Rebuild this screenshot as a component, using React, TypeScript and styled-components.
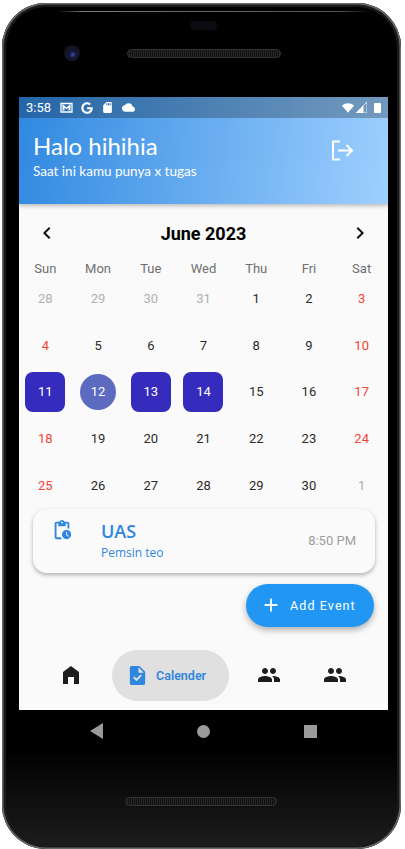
import styled, { createGlobalStyle } from "styled-components";
import { FaGoogle } from "react-icons/fa";
import {
  MdAdd,
  MdChevronLeft,
  MdChevronRight,
  MdCloud,
  MdHomeFilled,
  MdOutlinePendingActions,
  MdPeople,
  MdSdCard,
  MdTask,
} from "react-icons/md";

const WEEKDAYS = ["Sun", "Mon", "Tue", "Wed", "Thu", "Fri", "Sat"];

type Day = { label: number; muted?: boolean; selected?: boolean; today?: boolean };

const DAYS: Day[] = [
  { label: 28, muted: true },
  { label: 29, muted: true },
  { label: 30, muted: true },
  { label: 31, muted: true },
  ...[1, 2, 3, 4, 5, 6, 7, 8, 9, 10].map((label) => ({ label })),
  { label: 11, selected: true },
  { label: 12, today: true },
  { label: 13, selected: true },
  { label: 14, selected: true },
  ...Array.from({ length: 16 }, (_, i) => ({ label: i + 15 })),
  { label: 1, muted: true },
];

const App = () => {
  return (
    <Device>
      <GlobalStyle />
      <TopBezel>
        <Sensor />
        <CameraRow>
          <Camera />
          <Speaker />
        </CameraRow>
      </TopBezel>

      <Screen>
        <Header>
          <StatusBar>
            <StatusGroup>
              <Clock>3:58</Clock>
              <svg width="13" height="11" viewBox="0 0 13 11">
                <path d="M1 1.500h11v8.500H1z" fill="none" stroke="#fff" strokeWidth="1.300" />
                <path d="M2.500 2l4 3.600L10.500 2v6.500h-2V5.500L6.500 7.300 4.500 5.500V8.500h-2z" fill="#fff" />
              </svg>
              <FaGoogle size={12} color="#fff" />
              <MdSdCard size={13} color="#fff" />
              <MdCloud size={13} color="#fff" />
            </StatusGroup>
            <StatusGroup $gap={2}>
              <svg width="12" height="10" viewBox="0 0 14 11">
                <path d="M0 2.800C4-.8 10-.8 14 2.800L7 11z" fill="#fff" />
              </svg>
              <svg width="11" height="11" viewBox="0 0 11 11">
                <path d="M11 0v11H0z" fill="none" stroke="#fff" strokeWidth="0.800" />
                <path d="M7.500 3.500V11H0z" fill="#fff" />
              </svg>
              <Battery />
            </StatusGroup>
          </StatusBar>
          <HeaderBody>
            <div>
              <Greeting>Halo hihihia</Greeting>
              <Subtitle>Saat ini kamu punya x tugas</Subtitle>
            </div>
            <svg width="24" height="21" viewBox="0 0 24 21" fill="none" stroke="#fff" strokeWidth="2">
              <path d="M10 1.500H3v18h7" strokeLinejoin="round" />
              <path d="M8 10.500h14M16.500 5L22 10.500 16.500 16" />
            </svg>
          </HeaderBody>
        </Header>

        <MonthRow>
          <MdChevronLeft size={24} color="#111" />
          <MonthTitle>June 2023</MonthTitle>
          <MdChevronRight size={24} color="#111" />
        </MonthRow>

        <Weekdays>
          {WEEKDAYS.map((d) => (
            <Weekday key={d}>{d}</Weekday>
          ))}
        </Weekdays>

        <DayGrid>
          {DAYS.map((d, i) => (
            <DayCell key={i}>
              <DayNumber
                $muted={d.muted}
                $selected={d.selected}
                $today={d.today}
                $weekend={i % 7 === 0 || i % 7 === 6}
              >
                {d.label}
              </DayNumber>
            </DayCell>
          ))}
        </DayGrid>

        <EventCard>
          <EventIcon>
            <MdOutlinePendingActions size={22} color="#2f86e0" />
          </EventIcon>
          <EventText>
            <EventTitle>UAS</EventTitle>
            <EventNote>Pemsin teo</EventNote>
          </EventText>
          <EventTime>8:50 PM</EventTime>
        </EventCard>

        <FabRow>
          <Fab>
            <MdAdd size={22} color="#fff" />
            Add Event
          </Fab>
        </FabRow>

        <BottomNav>
          <NavTab $gapRight={8}>
            <MdHomeFilled size={24} color="#1d1d1d" />
          </NavTab>
          <ActiveTab>
            <MdTask size={23} color="#2f86e0" />
            Calender
          </ActiveTab>
          <NavTab $gapLeft={7}>
            <MdPeople size={24} color="#1d1d1d" />
          </NavTab>
          <NavTab>
            <MdPeople size={24} color="#1d1d1d" />
          </NavTab>
        </BottomNav>
      </Screen>

      <SoftKeys>
        <svg width="13" height="16" viewBox="0 0 13 16">
          <path d="M13 0v16L0 8z" fill="#9a9a9a" />
        </svg>
        <HomeKey />
        <RecentKey />
      </SoftKeys>

      <BottomBezel>
        <Speaker $bottom />
      </BottomBezel>
    </Device>
  );
};

export default App;

const GlobalStyle = createGlobalStyle`
  html, body {
    margin: 0;
    padding: 0;
    background: #fff;
  }
  body {
    font-family: Roboto, sans-serif;
    overflow: hidden;
  }
`;

const Device = styled.div`
  position: relative;
  box-sizing: border-box;
  width: 399px;
  height: 846px;
  margin: 3px 0 0 2px;
  padding: 0 13px 0 17px;
  background: linear-gradient(to bottom, #000 0, #000 88%, #1d1d1d 100%);
  border-radius: 44px;
  box-shadow: inset 0 0 0 1.5px #6a6a6a, inset 0 0 0 4px #1a1a1a;
  display: flex;
  flex-direction: column;
  &::before {
    content: "";
    position: absolute;
    top: 8px;
    left: 55px;
    right: 30px;
    height: 1px;
    background: linear-gradient(to right, transparent, #777 8%, #555 90%, transparent);
  }
`;
const TopBezel = styled.div`
  height: 94px;
  padding-top: 18px;
  box-sizing: border-box;
  display: flex;
  flex-direction: column;
  align-items: center;
`;
const Sensor = styled.div`
  width: 27px;
  height: 9px;
  border-radius: 5px;
  background: #0a0c12;
`;
const CameraRow = styled.div`
  align-self: stretch;
  display: flex;
  align-items: center;
  margin-top: 15px;
  padding-left: 45px;
`;
const Camera = styled.div`
  width: 16px;
  height: 16px;
  border-radius: 50%;
  background: radial-gradient(circle at 55% 60%, #3a4fb0 0, #141a3a 25%, #12131c 60%);
  margin-right: 47px;
`;
const Speaker = styled.div<{ $bottom?: boolean }>`
  width: ${(p) => (p.$bottom ? "152px" : "154px")};
  height: 9px;
  box-sizing: border-box;
  border-radius: 5px;
  background: repeating-linear-gradient(to right, #101010 0 1px, #262626 1px 2px);
  border: 1px solid #333;
`;
const Screen = styled.div`
  width: 369px;
  height: 613px;
  background: #fafafa;
  display: flex;
  flex-direction: column;
  flex-shrink: 0;
`;
const Header = styled.div`
  height: 107px;
  flex-shrink: 0;
  background: linear-gradient(100deg, #2f88e0 0%, #9fd0ff 100%);
  box-shadow: 0 2px 4px rgba(0, 0, 0, 0.25);
  display: flex;
  flex-direction: column;
`;
const StatusBar = styled.div`
  height: 21px;
  padding: 0 7px;
  background: rgba(0, 0, 0, 0.25);
  display: flex;
  justify-content: space-between;
  align-items: center;
`;
const StatusGroup = styled.div<{ $gap?: number }>`
  display: flex;
  align-items: center;
  gap: ${(p) => p.$gap ?? 8}px;
`;
const Clock = styled.span`
  font-size: 13px;
  color: #fff;
  margin-right: 1px;
`;
const Battery = styled.div`
  width: 7px;
  height: 10px;
  margin-left: 5px;
  border-radius: 1px;
  background: #fff;
`;
const HeaderBody = styled.div`
  flex: 1;
  padding: 13px 34px 0 14px;
  display: flex;
  justify-content: space-between;
  align-items: flex-start;
  color: #fff;
  svg {
    margin-top: 9px;
  }
`;
const Greeting = styled.div`
  font-family: Lato, sans-serif;
  font-size: 24px;
  line-height: 29px;
`;
const Subtitle = styled.div`
  font-family: Lato, sans-serif;
  font-size: 13.5px;
  line-height: 18px;
  margin-top: 2px;
`;
const MonthRow = styled.div`
  height: 28px;
  margin-top: 15px;
  padding: 0 16px;
  display: flex;
  justify-content: space-between;
  align-items: center;
`;
const MonthTitle = styled.div`
  font-size: 18px;
  font-weight: 700;
  color: #000;
`;
const Weekdays = styled.div`
  margin-top: 15px;
  height: 13px;
  display: grid;
  grid-template-columns: repeat(7, 1fr);
`;
const Weekday = styled.div`
  font-size: 13px;
  line-height: 14px;
  text-align: center;
  color: #6f6f6f;
`;
const DayGrid = styled.div`
  display: grid;
  grid-template-columns: repeat(7, 1fr);
  grid-auto-rows: 46.75px;
`;
const DayCell = styled.div`
  display: flex;
  justify-content: center;
  align-items: center;
`;
const DayNumber = styled.div<{
  $muted?: boolean;
  $selected?: boolean;
  $today?: boolean;
  $weekend?: boolean;
}>`
  font-size: 13px;
  display: flex;
  justify-content: center;
  align-items: center;
  width: ${(p) => (p.$selected ? "40px" : "36px")};
  height: ${(p) => (p.$selected ? "40px" : "36px")};
  border-radius: ${(p) => (p.$selected ? "8px" : "50%")};
  background: ${(p) => (p.$selected ? "#352bbd" : p.$today ? "#5c6bc0" : "transparent")};
  color: ${(p) => {
    if (p.$selected || p.$today) return "#fff";
    if (p.$muted) return "#b0b0b0";
    if (p.$weekend) return "#f44336";
    return "#2a2a2a";
  }};
`;
const EventCard = styled.div`
  box-sizing: border-box;
  height: 64px;
  margin: 0 13px 0 14px;
  padding: 0 19px 0 19px;
  flex-shrink: 0;
  background: #fafafa;
  border-radius: 14px;
  box-shadow: 0 2px 4px rgba(0, 0, 0, 0.3);
  display: flex;
  align-items: center;
`;
const EventIcon = styled.div`
  width: 49px;
  height: 44px;
  svg {
    display: block;
    margin-left: -1px;
  }
`;
const EventText = styled.div`
  flex: 1;
`;
const EventTitle = styled.div`
  font-family: "Open Sans", sans-serif;
  font-size: 18px;
  font-weight: 600;
  line-height: 22px;
  color: #2f86e0;
`;
const EventNote = styled.div`
  font-family: "Open Sans", sans-serif;
  font-size: 12px;
  line-height: 16px;
  margin-top: 3px;
  color: #2f86e0;
`;
const EventTime = styled.div`
  font-size: 13px;
  color: #9e9e9e;
`;
const FabRow = styled.div`
  display: flex;
  justify-content: flex-end;
  padding: 11px 14px 0 0;
`;
const Fab = styled.div`
  box-sizing: border-box;
  width: 128px;
  height: 43px;
  padding-left: 14px;
  border-radius: 22px;
  background: #2196f3;
  box-shadow: 0 3px 6px rgba(0, 0, 0, 0.3);
  display: flex;
  align-items: center;
  gap: 8px;
  color: #fff;
  font-size: 12.5px;
  font-weight: 400;
  letter-spacing: 1.1px;
`;
const BottomNav = styled.div`
  margin-top: 23px;
  padding-left: 19px;
  display: flex;
  align-items: center;
  height: 51px;
`;
const NavTab = styled.div<{ $gapLeft?: number; $gapRight?: number }>`
  width: 66px;
  display: flex;
  justify-content: center;
  margin-left: ${(p) => p.$gapLeft ?? 0}px;
  margin-right: ${(p) => p.$gapRight ?? 0}px;
`;
const ActiveTab = styled.div`
  box-sizing: border-box;
  width: 117px;
  height: 51px;
  padding-left: 14px;
  border-radius: 26px;
  background: #e0e0e0;
  display: flex;
  align-items: center;
  gap: 7px;
  font-size: 12.5px;
  font-weight: 600;
  color: #2f86e0;
`;
const SoftKeys = styled.div`
  height: 42px;
  display: flex;
  justify-content: center;
  align-items: center;
  gap: 94px;
`;
const HomeKey = styled.div`
  width: 13px;
  height: 13px;
  border-radius: 50%;
  background: #9a9a9a;
`;
const RecentKey = styled.div`
  width: 13px;
  height: 13px;
  background: #9a9a9a;
`;
const BottomBezel = styled.div`
  padding: 45px 5px 0 0;
  display: flex;
  justify-content: center;
`;
